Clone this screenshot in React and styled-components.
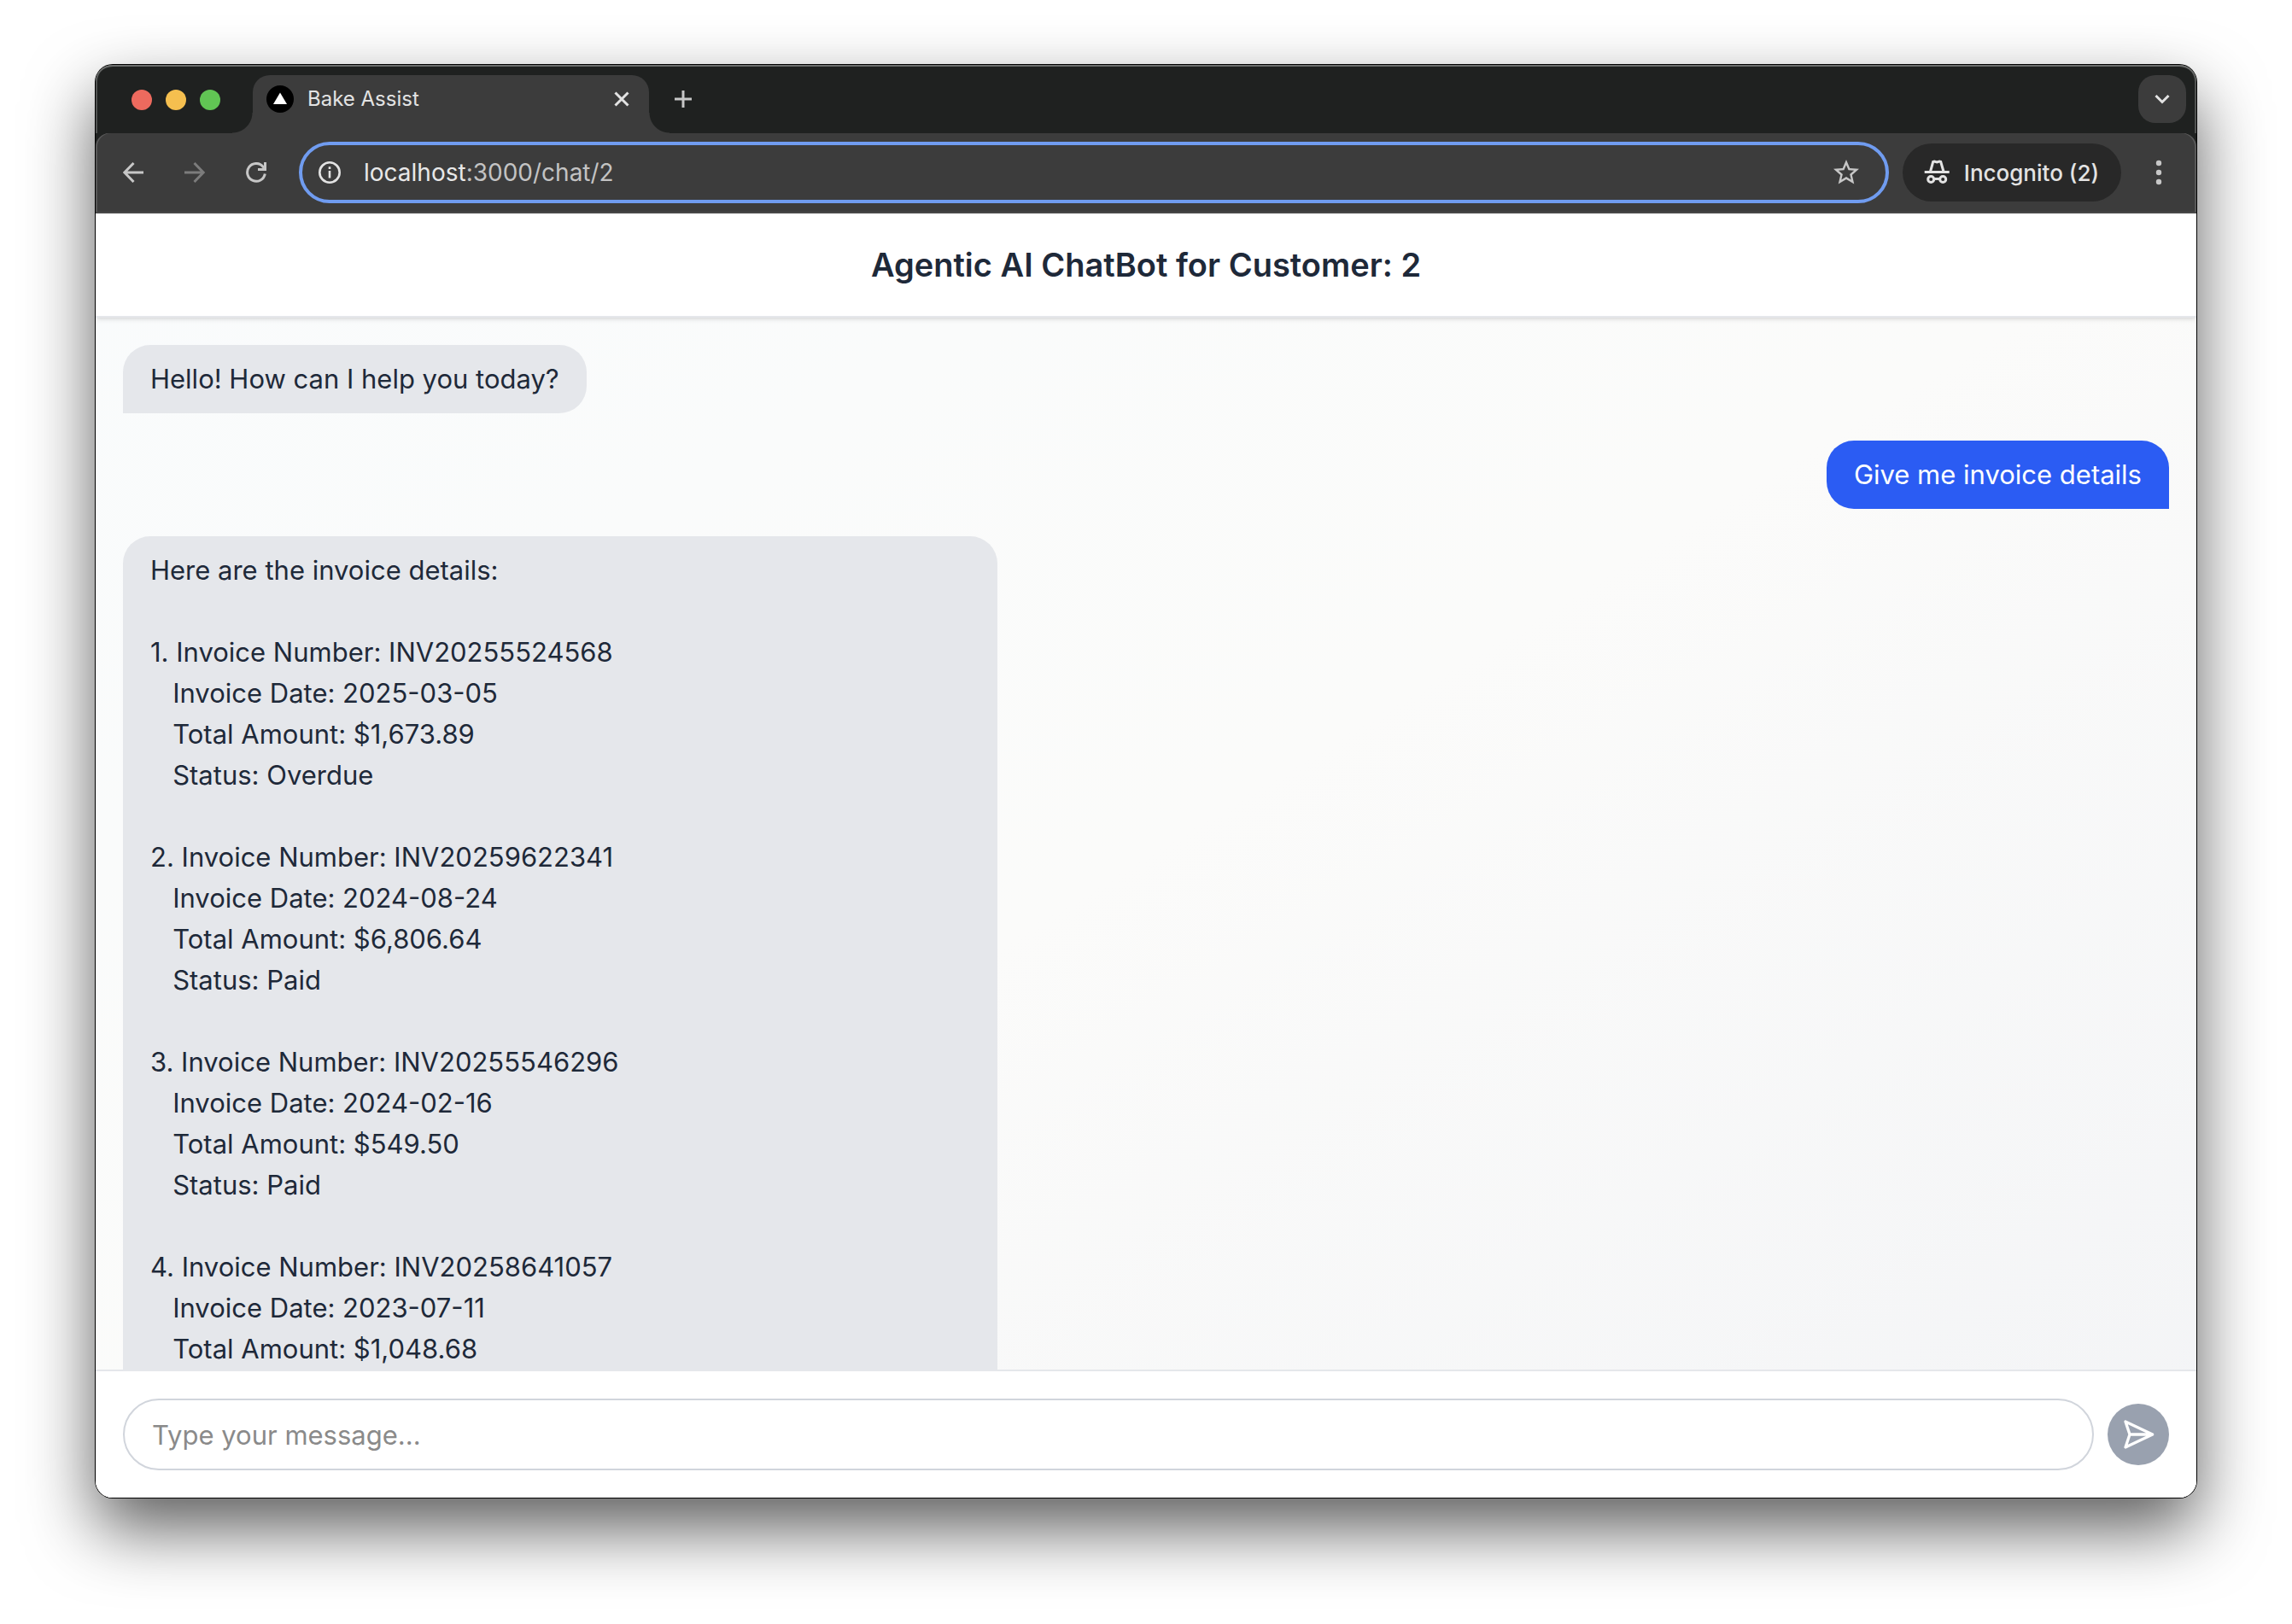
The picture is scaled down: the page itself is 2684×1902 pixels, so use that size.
import React from "react";
import styled, { createGlobalStyle } from "styled-components";

const GlobalStyle = createGlobalStyle`
  *, *::before, *::after { box-sizing: border-box; }
  html, body, #root { height: 100%; }
  body {
    margin: 0;
    background: #fff;
    font-family: Inter, Roboto, "Liberation Sans", sans-serif;
    -webkit-font-smoothing: antialiased;
  }
  button, input { font: inherit; border: 0; padding: 0; margin: 0; background: none; color: inherit; }
`;

const Desktop = styled.div`
  height: 100vh;
  padding: 76px 112px 148px;
  display: flex;
  overflow: hidden;
`;

const Window = styled.div`
  flex: 1;
  min-width: 0;
  display: flex;
  flex-direction: column;
  position: relative;
  border-radius: 20px;
  background: #fff;
  box-shadow: 0 0 0 1px #000, 0 36px 80px rgba(0, 0, 0, 0.64);
`;

const TabStrip = styled.div`
  height: 80px;
  flex: none;
  display: flex;
  align-items: flex-end;
  padding: 0 12px 0 42px;
  background: #1f2120;
  border-radius: 20px 20px 0 0;
  box-shadow: inset 0 2px 0 #6b6d6c, inset 2px 0 0 #505251, inset -2px 0 0 #505251;
`;

const Lights = styled.div`
  display: flex;
  gap: 16px;
  align-self: center;
  padding-top: 2px;
  margin-right: 38px;
`;

const Light = styled.span`
  width: 24px;
  height: 24px;
  border-radius: 50%;
  background: ${(p) => p.$color};
`;

const Tab = styled.div`
  position: relative;
  width: 464px;
  height: 68px;
  display: flex;
  align-items: center;
  padding: 0 20px 12px 16px;
  border-radius: 20px 20px 0 0;
  background: #3c3c3c;
  color: #e3e3e3;
  font-size: 24px;

  &::before, &::after {
    content: "";
    position: absolute;
    bottom: 0;
    width: 24px;
    height: 24px;
  }
  &::before {
    right: 100%;
    background: radial-gradient(circle at 0 0, transparent 23px, #3c3c3c 24px);
  }
  &::after {
    left: 100%;
    background: radial-gradient(circle at 100% 0, transparent 23px, #3c3c3c 24px);
  }
`;

const TabTitle = styled.span`
  flex: 1;
  margin-left: 16px;
  line-height: 32px;
`;

const IconButton = styled.button`
  width: ${(p) => p.$size || 24}px;
  height: ${(p) => p.$size || 24}px;
  display: flex;
  align-items: center;
  justify-content: center;
  flex: none;
  color: ${(p) => p.$color || "#c7c7c7"};
`;

const NewTab = styled(IconButton)`
  && { margin: 0 auto 28px 28px; }
`;

const TabSearch = styled(IconButton)`
  && {
    margin-bottom: 12px;
    border-radius: 20px;
    background: #3c3c3c;
  }
`;

const ToolbarBack = styled.div`
  flex: none;
  background: #1f2120;
`;

const Toolbar = styled.div`
  height: 94px;
  display: flex;
  align-items: center;
  padding: 0 32px;
  background: #3c3c3c;
  border-bottom: 2px solid #484848;
  border-radius: 16px 16px 0 0;
  box-shadow: inset 2px 0 0 #585858, inset -2px 0 0 #585858;
`;

const NavGroup = styled.div`
  display: flex;
  gap: 48px;
  margin-right: 38px;
`;

const AddressBar = styled.div`
  flex: 1;
  min-width: 0;
  height: 72px;
  display: flex;
  align-items: center;
  gap: 26px;
  padding: 0 28px 0 18px;
  border: 4px solid #709cf0;
  border-radius: 36px;
`;

const Address = styled.label`
  position: relative;
  flex: 1;
  min-width: 0;
  font-size: 28px;
  line-height: 36px;
  color: #c3c3c3;
  white-space: nowrap;

  b { font-weight: 400; color: #e8e8e8; }
`;

const AddressInput = styled.input`
  position: absolute;
  inset: 0;
  width: 100%;
  opacity: 0;
`;

const Incognito = styled.button`
  && {
    height: 68px;
    display: flex;
    align-items: center;
    gap: 16px;
    margin: 0 32px 0 16px;
    padding: 0 26px 0 24px;
    border-radius: 34px;
    background: #282828;
    color: #e3e3e3;
    font-size: 26px;
    font-weight: 500;
    white-space: nowrap;
  }
`;

const Page = styled.div`
  flex: 1;
  min-height: 0;
  display: flex;
  flex-direction: column;
  border-radius: 0 0 20px 20px;
  overflow: hidden;
  color: #1e2939;
  background: linear-gradient(to bottom right, #f9fbfc, #fbfbfa 50%, #f3f4f6);
`;

const Header = styled.header`
  flex: none;
  padding: 32px;
  background: #fff;
  border-bottom: 2px solid #e5e7eb;
  box-shadow: 0 2px 6px rgba(0, 0, 0, 0.1), 0 2px 4px -2px rgba(0, 0, 0, 0.1);
  z-index: 1;
`;

const Title = styled.h1`
  margin: 0;
  font-size: 38px;
  line-height: 56px;
  font-weight: 600;
  text-align: center;
`;

const Messages = styled.main`
  flex: 1;
  min-height: 0;
  overflow: hidden;
  display: flex;
  flex-direction: column;
  gap: 32px;
  padding: 32px;
`;

const Bubble = styled.div`
  flex: none;
  max-width: 1024px;
  align-self: ${(p) => (p.$own ? "flex-end" : "flex-start")};
  width: ${(p) => (p.$wide ? "100%" : "auto")};
  padding: 16px 32px;
  border-radius: ${(p) => (p.$own ? "32px 32px 0 32px" : "32px 32px 32px 0")};
  background: ${(p) => (p.$own ? "#2b5cf3" : "#e5e7eb")};
  color: ${(p) => (p.$own ? "#fff" : "#1e2939")};
  font-size: 31px;
  line-height: 48px;
  white-space: pre-wrap;
`;

const Composer = styled.form`
  flex: none;
  display: flex;
  align-items: center;
  gap: 16px;
  padding: 32px;
  background: #fff;
  border-top: 2px solid #e5e7eb;
`;

const MessageInput = styled.input`
  && {
    flex: 1;
    min-width: 0;
    height: 84px;
    padding: 0 32px;
    border: 2px solid #d1d5dc;
    border-radius: 42px;
    font-size: 31px;
    outline: none;
  }
  &::placeholder { color: #8a8a8a; opacity: 1; }
`;

const SendButton = styled(IconButton)`
  && {
    border-radius: 50%;
    background: #99a1af;
    color: #fff;
  }
`;

const Line = ({ size = 24, width = 3, children, ...rest }) => (
  <svg width={size} height={size} viewBox={`0 0 ${size} ${size}`} fill="none" stroke="currentColor" strokeWidth={width} aria-hidden="true" {...rest}>
    {children}
  </svg>
);

const invoices = [
  ["INV20255524568", "2025-03-05", "$1,673.89", "Overdue"],
  ["INV20259622341", "2024-08-24", "$6,806.64", "Paid"],
  ["INV20255546296", "2024-02-16", "$549.50", "Paid"],
  ["INV20258641057", "2023-07-11", "$1,048.68", "Paid"],
];

const invoiceText =
  "Here are the invoice details:\n\n" +
  invoices
    .map(([number, date, total, status], i) =>
      [
        `${i + 1}. Invoice Number: ${number}`,
        `   Invoice Date: ${date}`,
        `   Total Amount: ${total}`,
        `   Status: ${status}`,
      ].join("\n")
    )
    .join("\n\n");

export default function App() {
  return (
    <>
      <GlobalStyle />
      <Desktop>
        <Window>
          <TabStrip>
            <Lights>
              <Light $color="#ed6a5e" />
              <Light $color="#f5bf4f" />
              <Light $color="#61c554" />
            </Lights>
            <Tab>
              <svg width="32" height="32" viewBox="0 0 32 32" aria-hidden="true">
                <circle cx="16" cy="16" r="16" fill="#000" />
                <path d="M16 8.500l8 13.500H8z" fill="#fff" />
              </svg>
              <TabTitle>Bake Assist</TabTitle>
              <IconButton aria-label="Close tab" $color="#e3e3e3">
                <Line><path d="M4.500 4.500l15 15M19.500 4.500l-15 15" /></Line>
              </IconButton>
            </Tab>
            <NewTab aria-label="New tab">
              <Line><path d="M12 2v20M2 12h20" /></Line>
            </NewTab>
            <TabSearch $size={56} $color="#e3e3e3" aria-label="Search tabs">
              <Line width={3}><path d="M4.500 8l7.500 7.500L19.500 8" /></Line>
            </TabSearch>
          </TabStrip>
          <ToolbarBack>
            <Toolbar>
              <NavGroup>
                <IconButton aria-label="Back">
                  <Line><path d="M24 12H2M12.500 1L1.800 12l10.700 11" /></Line>
                </IconButton>
                <IconButton aria-label="Forward" $color="#7c7c7c">
                  <Line><path d="M0 12h22M11.500 1l10.700 11-10.700 11" /></Line>
                </IconButton>
                <IconButton aria-label="Reload">
                  <Line><path d="M22.300 13.500A10.400 10.400 0 1 1 20 5.200L22 7.500M22.500 0v8.500H14" /></Line>
                </IconButton>
              </NavGroup>
              <AddressBar>
                <IconButton aria-label="Site information" $size={28} $color="#e3e3e3">
                  <Line size={28} width={2.6}>
                    <circle cx="14" cy="14" r="11.700" />
                    <path d="M14 12v8.500M14 7.300v2.700" />
                  </Line>
                </IconButton>
                <Address>
                  <b>localhost</b>:3000/chat/2
                  <AddressInput aria-label="Address" />
                </Address>
                <IconButton aria-label="Bookmark" $size={36}>
                  <svg width="36" height="36" viewBox="0 0 24 24" fill="currentColor" aria-hidden="true">
                    <path d="M22 9.240l-7.190-.620L12 2 9.190 8.630 2 9.240l5.460 4.730L5.820 21 12 17.270 18.180 21l-1.630-7.030L22 9.240zM12 15.400l-3.760 2.270 1-4.280-3.320-2.880 4.380-.380L12 6.100l1.710 4.040 4.380.380-3.320 2.880 1 4.280L12 15.400z" />
                  </svg>
                </IconButton>
              </AddressBar>
              <Incognito>
                <Line size={32} width={3}>
                  <path d="M1.700 15.500h29" />
                  <path d="M8.500 15l3.200-11.500 1.500-.500 3 1 3-1 1.500.500L24 15" />
                  <circle cx="9.200" cy="24" r="3.500" />
                  <circle cx="23.200" cy="24" r="3.500" />
                  <path d="M12.700 23.500h7" />
                </Line>
                Incognito (2)
              </Incognito>
              <IconButton aria-label="Menu">
                <svg width="24" height="32" viewBox="0 0 24 32" fill="currentColor" aria-hidden="true">
                  <circle cx="12" cy="5" r="3.200" />
                  <circle cx="12" cy="16" r="3.200" />
                  <circle cx="12" cy="27" r="3.200" />
                </svg>
              </IconButton>
            </Toolbar>
          </ToolbarBack>
          <Page>
            <Header>
              <Title>Agentic AI ChatBot for Customer: 2</Title>
            </Header>
            <Messages>
              <Bubble>Hello! How can I help you today?</Bubble>
              <Bubble $own>Give me invoice details</Bubble>
              <Bubble $wide>{invoiceText}</Bubble>
            </Messages>
            <Composer onSubmit={(e) => e.preventDefault()}>
              <MessageInput aria-label="Message" placeholder="Type your message..." />
              <SendButton type="submit" aria-label="Send" $size={72}>
                <svg width="40" height="40" viewBox="0 0 24 24" fill="none" stroke="currentColor" strokeWidth="2" strokeLinecap="round" strokeLinejoin="round" aria-hidden="true">
                  <path d="M3 3l3 9-3 9 19-9zM6 12h16" />
                </svg>
              </SendButton>
            </Composer>
          </Page>
        </Window>
      </Desktop>
    </>
  );
}
